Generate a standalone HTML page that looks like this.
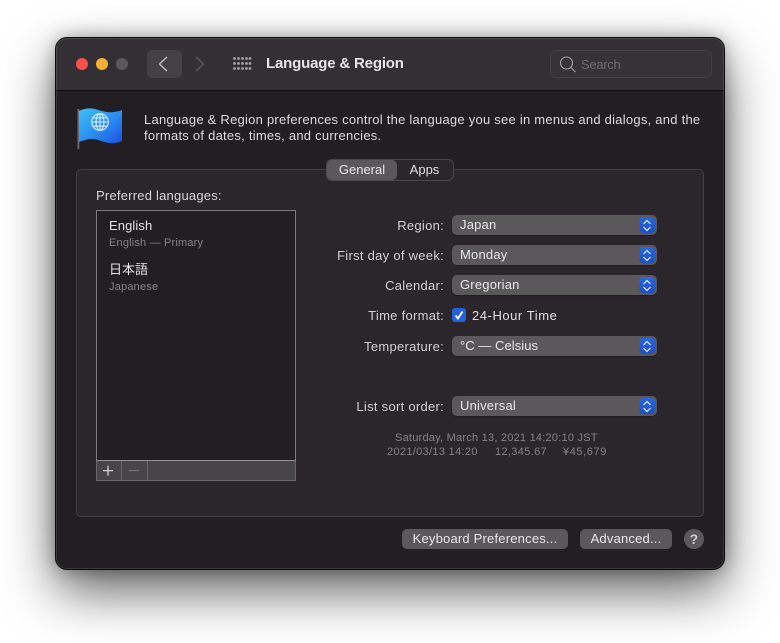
<!DOCTYPE html>
<html><head><meta charset="utf-8">
<style>
html,body{margin:0;padding:0;width:780px;height:643px;overflow:hidden;background:#fff}
body{position:relative;font-family:"Liberation Sans","Noto Sans CJK JP",sans-serif;font-size:13px;color:#dedcde;filter:blur(.3px)}
.a{position:absolute;white-space:nowrap;line-height:16px}
.r{text-align:right;width:200px;left:244px;color:#d2d0d2;letter-spacing:.28px}
.pop{position:absolute;left:452px;width:205px;height:20px;border-radius:5px;background:#5b585c;color:#e8e6e8;line-height:19px;text-indent:8px;letter-spacing:.2px;box-shadow:0 1px 1px rgba(0,0,0,.25)}
.pop i{position:absolute;right:2px;top:2px;width:16px;height:16px;border-radius:4px;background:linear-gradient(#2a66dc,#1d50c0)}
.pop svg{position:absolute;left:4px;top:2px}
.btn{position:absolute;top:529px;height:20px;border-radius:5px;background:#5b585c;color:#e8e6e8;text-align:center;line-height:19px;white-space:nowrap;letter-spacing:.2px}
.s{font-size:11px;color:#858386}
</style></head><body>
<div style="position:absolute;left:56px;top:38px;width:668px;height:531px;border-radius:11px;box-shadow:0 0 0 1px #0a0a0a,0 22px 52px rgba(0,0,0,.62),0 0 18px rgba(0,0,0,.35);background:#221e23;overflow:hidden">
  <div style="position:absolute;left:0;top:0;width:668px;height:52px;background:#332f34;border-bottom:1px solid #0c0b0d"></div>
</div>
<div style="position:absolute;left:56px;top:38px;width:668px;height:531px;border-radius:11px;box-shadow:inset 0 0 0 1px rgba(255,255,255,.12)"></div>

<div style="position:absolute;left:76px;top:58px;width:12px;height:12px;border-radius:50%;background:#f9504c"></div>
<div style="position:absolute;left:96px;top:58px;width:12px;height:12px;border-radius:50%;background:#f7ae32"></div>
<div style="position:absolute;left:116px;top:58px;width:12px;height:12px;border-radius:50%;background:#5a575b"></div>

<div style="position:absolute;left:147px;top:50px;width:35px;height:28px;border-radius:5px;background:#444145"></div>
<svg style="position:absolute;left:147px;top:50px" width="35" height="28" fill="none" stroke="#c6c4c6" stroke-width="1.3"><path d="M20 7l-7.500 7 7.500 7"/></svg>
<svg style="position:absolute;left:190px;top:50px" width="20" height="28" fill="none" stroke="#5f5c60" stroke-width="1.3"><path d="M6 7l7.500 7-7.500 7"/></svg>
<svg style="position:absolute;left:232px;top:56px" width="20" height="16" fill="#a3a1a3">
<circle cx="2.500" cy="2.500" r="1.400"/><circle cx="6.500" cy="2.500" r="1.400"/><circle cx="10.500" cy="2.500" r="1.400"/><circle cx="14.500" cy="2.500" r="1.400"/><circle cx="18" cy="2.500" r="1.400"/>
<circle cx="2.500" cy="7.500" r="1.400"/><circle cx="6.500" cy="7.500" r="1.400"/><circle cx="10.500" cy="7.500" r="1.400"/><circle cx="14.500" cy="7.500" r="1.400"/><circle cx="18" cy="7.500" r="1.400"/>
<circle cx="2.500" cy="12.500" r="1.400"/><circle cx="6.500" cy="12.500" r="1.400"/><circle cx="10.500" cy="12.500" r="1.400"/><circle cx="14.500" cy="12.500" r="1.400"/><circle cx="18" cy="12.500" r="1.400"/>
</svg>
<div class="a" style="left:266px;top:56px;font-size:15px;font-weight:bold;color:#e6e4e6;letter-spacing:-.18px">Language &amp; Region</div>

<div style="position:absolute;left:550px;top:50px;width:160px;height:26px;border:1px solid #434044;border-radius:6px;background:#363237"></div>
<svg style="position:absolute;left:558px;top:55px" width="20" height="18" fill="none" stroke="#a3a1a3" stroke-width="1.1"><circle cx="8.500" cy="8" r="6"/><path d="M13 12.500l4.500 4.500"/></svg>
<div class="a" style="left:581px;top:57px;color:#6f6c70;letter-spacing:-.3px">Search</div>

<svg style="position:absolute;left:76px;top:105px" width="48" height="46">
<defs><linearGradient id="f" x1="0" y1="0" x2="1" y2="1"><stop offset="0" stop-color="#3cc0f8"/><stop offset=".55" stop-color="#2a8cf0"/><stop offset="1" stop-color="#1c50e0"/></linearGradient></defs>
<rect x="1.500" y="4" width="1.800" height="40" fill="#6e6c70"/>
<path d="M3 6C9 3 14 3 19 4C26 6 32 8 38 7C41 6.500 44 6 46 5L46 36C41 38 38 38.500 33 38C26 37 20 33 14 34C10 34.500 6 36 3 37Z" fill="url(#f)"/>
<g fill="none" stroke="#dcecfb" stroke-width="1.100"><circle cx="24" cy="17" r="8.300"/><ellipse cx="24" cy="17" rx="4" ry="8.300"/><path d="M15.700 17h16.600M17 12.800h14M17 21.200h14M24 8.700v16.600"/></g>
</svg>
<div class="a" style="left:144px;top:112px;color:#dcdadc;font-size:13px;letter-spacing:.245px">Language &amp; Region preferences control the language you see in menus and dialogs, and the</div>
<div class="a" style="left:144px;top:128px;color:#dcdadc;letter-spacing:.245px">formats of dates, times, and currencies.</div>

<div style="position:absolute;left:76px;top:169px;width:626px;height:346px;border:1px solid #423f43;border-radius:5px;background:#2a262b"></div>

<div style="position:absolute;left:326px;top:159px;width:126px;height:20px;border:1px solid #4a474b;border-radius:6px;background:#2a262b"></div>
<div class="a" style="left:327px;top:160px;width:70px;height:20px;line-height:19px;border-radius:5px;background:#5b585c;text-align:center;color:#e8e6e8">General</div>
<div class="a" style="left:397px;top:160px;width:55px;height:20px;line-height:19px;text-align:center;color:#e0dee0">Apps</div>

<div class="a" style="left:96px;top:188px;color:#d8d6d8;letter-spacing:.22px">Preferred languages:</div>

<div style="position:absolute;left:96px;top:210px;width:198px;height:249px;border:1px solid #7d7b7e;border-bottom:0;background:#221e23"></div>
<div style="position:absolute;left:96px;top:460px;width:198px;height:19px;border:1px solid #6a686b;border-top:1px solid #949295;background:#47444a"></div>
<div style="position:absolute;left:121px;top:461px;width:1px;height:19px;background:#6a686b"></div>
<div style="position:absolute;left:147px;top:461px;width:1px;height:19px;background:#6a686b"></div>
<svg style="position:absolute;left:96px;top:461px" width="50" height="20" stroke-width="1.2"><path d="M7 9.700h10M12 4.700v10" stroke="#dedcde" fill="none"/><path d="M33 9.500h10" stroke="#777578" fill="none"/></svg>

<div class="a" style="left:109px;top:218px;color:#e4e2e4;letter-spacing:.1px">English</div>
<div class="a s" style="left:109px;top:235px;letter-spacing:.18px">English — Primary</div>
<div class="a" style="left:109px;top:262px;color:#e4e2e4;font-size:13px">日本語</div>
<div class="a s" style="left:109px;top:279px;letter-spacing:.2px">Japanese</div>

<div class="a r" style="top:218px">Region:</div>
<div class="a r" style="top:248px">First day of week:</div>
<div class="a r" style="top:278px">Calendar:</div>
<div class="a r" style="top:308px">Time format:</div>
<div class="a r" style="top:339px">Temperature:</div>
<div class="a r" style="top:399px">List sort order:</div>

<div class="pop" style="top:215px">Japan<i><svg width="8" height="13" fill="none" stroke="#e4ecfb" stroke-width="1.200"><path d="M.5 5l3.500-3.500L7.500 5M.5 8l3.500 3.500L7.500 8"/></svg></i></div>
<div class="pop" style="top:245px">Monday<i><svg width="8" height="13" fill="none" stroke="#e4ecfb" stroke-width="1.200"><path d="M.5 5l3.500-3.500L7.500 5M.5 8l3.500 3.500L7.500 8"/></svg></i></div>
<div class="pop" style="top:275px">Gregorian<i><svg width="8" height="13" fill="none" stroke="#e4ecfb" stroke-width="1.200"><path d="M.5 5l3.500-3.500L7.500 5M.5 8l3.500 3.500L7.500 8"/></svg></i></div>
<div class="pop" style="top:336px;letter-spacing:.05px">°C — Celsius<i><svg width="8" height="13" fill="none" stroke="#e4ecfb" stroke-width="1.200"><path d="M.5 5l3.500-3.500L7.500 5M.5 8l3.500 3.500L7.500 8"/></svg></i></div>
<div class="pop" style="top:396px">Universal<i><svg width="8" height="13" fill="none" stroke="#e4ecfb" stroke-width="1.200"><path d="M.5 5l3.500-3.500L7.500 5M.5 8l3.500 3.500L7.500 8"/></svg></i></div>

<div style="position:absolute;left:452px;top:308px;width:14px;height:14px;border-radius:3px;background:#2560d8"></div>
<svg style="position:absolute;left:452px;top:308px" width="14" height="14" fill="none" stroke="#fff" stroke-width="1.800"><path d="M3.500 7.500l2.500 3 4.500-7"/></svg>
<div class="a" style="left:472px;top:308px;color:#e0dee0;letter-spacing:.55px">24-Hour Time</div>

<div class="a s" style="left:395px;top:430px;letter-spacing:.23px">Saturday, March 13, 2021 14:20:10 JST</div>
<div class="a s" style="left:387px;top:444px;letter-spacing:.32px">2021/03/13 14:20</div>
<div class="a s" style="left:495px;top:444px;letter-spacing:.34px">12,345.67</div>
<div class="a s" style="left:563px;top:444px;letter-spacing:.6px">¥45,679</div>

<div class="btn" style="left:402px;width:166px">Keyboard Preferences...</div>
<div class="btn" style="left:580px;width:92px">Advanced...</div>
<div class="btn" style="left:684px;width:20px;border-radius:50%;font-size:14px;font-weight:bold;line-height:20px;color:#d0ced0">?</div>
</body></html>
